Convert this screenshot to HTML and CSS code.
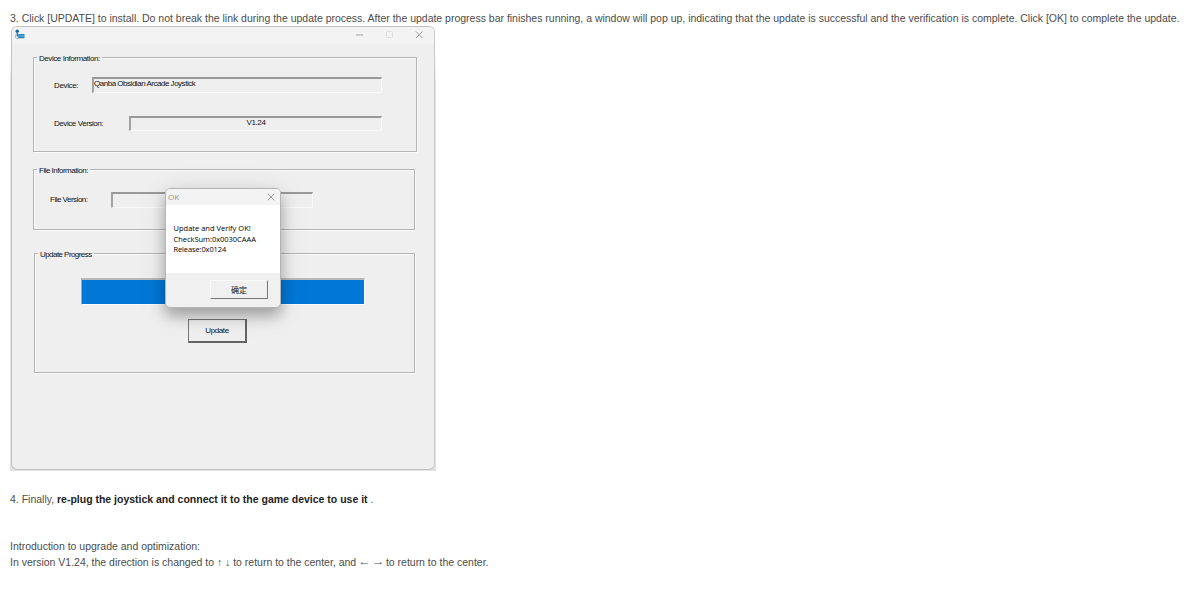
FILE: index.html
```html
<!DOCTYPE html>
<html lang="en">
<head>
<meta charset="utf-8">
<title>Firmware update guide</title>
<link rel="stylesheet" href="styles.css">
</head>
<body>
<main class="page">
  <p class="step step-install">3. Click [UPDATE] to install. Do not break the link during the update process. After the update progress bar finishes running, a window will pop up, indicating that the update is successful and the verification is complete. Click [OK] to complete the update.</p>

  <div class="shot">
  <section class="window">
    <header class="titlebar">
      <svg class="app-icon" viewBox="0 0 11 11">
        <circle cx="3.2" cy="2.2" r="1.7" fill="#1668a8"/>
        <path d="M2.6 3h1.4v4.5H2.6z" fill="#2a7ab5"/>
        <path d="M2.5 5C.8 6.2.8 8.8 2.6 9.6h2" fill="none" stroke="#9aaebb"/>
        <path d="M4.200 5H10.500v4.200H4.200z" fill="#2585c4"/>
        <path d="M5 7h5" stroke="#8bc4e6" stroke-width=".8"/>
      </svg>
      <svg class="controls" viewBox="0 0 70 10">
        <path d="M1 5h7" stroke="#a2a2a2" stroke-width="1.200"/>
        <rect x="31.500" y="1.500" width="6" height="6" rx="1" fill="none" stroke="#dedede"/>
        <path d="M61 1.500l6.500 6.500M67.500 1.500L61 8" stroke="#999" stroke-width="1"/>
      </svg>
    </header>

    <div class="group group-device">
      <div class="legend"><span class="t-devinfo">Device Information:</span></div>
      <div class="row row-device">
        <span class="label t-device">Device:</span>
        <div class="field field-device"><span class="t-name">Qanba Obsidian Arcade Joystick</span></div>
      </div>
      <div class="row row-version">
        <span class="label t-devver">Device Version:</span>
        <div class="field field-version"><span class="t-version">V1.24</span></div>
      </div>
    </div>

    <div class="group group-file">
      <div class="legend"><span class="t-fileinfo">File Information:</span></div>
      <div class="row row-file">
        <span class="label t-filever">File Version:</span>
        <div class="field field-file"></div>
      </div>
    </div>

    <div class="group group-progress">
      <div class="legend"><span class="t-progress">Update Progress</span></div>
      <div class="progress"></div>
      <button class="update">Update</button>
    </div>

    <section class="dialog">
      <header class="dialog-title">
        <span>OK</span>
        <svg class="dialog-close" viewBox="0 0 8 8"><path d="M.7.7l6.600 6.600M7.300.7L.7 7.300" stroke="#8c8c8c" stroke-width=".9"/></svg>
      </header>
      <div class="dialog-body">
        <div class="m1">Update and Verify OK!</div>
        <div class="m2">CheckSum:0x0030CAAA</div>
        <div class="m3">Release:0x0124</div>
      </div>
      <footer class="dialog-footer"><button class="confirm">确定</button></footer>
    </section>
  </section>
  </div>

  <p class="step step-replug">4. Finally, <strong>re-plug the joystick and connect it to the game device to use it</strong> .</p>
  <p class="step intro">Introduction to upgrade and optimization:</p>
  <p class="step note">In version V1.24, the direction is changed to ↑ ↓ to return to the center, and <span class="arrow">←</span> <span class="arrow">→</span> to return to the center.</p>
</main>
</body>
</html>
```
FILE: styles.css
```css
* { box-sizing: border-box; }
body {
  margin: 0;
  background: #fff;
  color: #4c4c4c;
  font-family: "Liberation Sans", Arial, sans-serif;
}
.page { padding: 10px 0 0 10px; }
.step {
  margin: 0;
  font-size: 10.5px;
  line-height: 16px;
  letter-spacing: -.007px;
  white-space: nowrap;
}
.step strong { color: #222; }
.arrow { display: inline-block; transform: translateY(-1px) scaleX(1.2); }
.shot {
  width: 426px;
  height: 445px;
  padding-left: 1px;
  background: linear-gradient(#fff 30px, #e2e2e2 60px);
}
.window {
  position: relative;
  width: 424px;
  height: 444px;
  border: 1px solid #c2c2c2;
  border-right-color: #cacaca;
  border-radius: 6px;
  background: #efefef;
  overflow: hidden;
  color: #111;
  font-size: 8px;
}
.titlebar {
  display: flex;
  justify-content: space-between;
  height: 17px;
  padding: 2px 9px 0 2px;
  background: #f3f3f3;
}
.app-icon { width: 11px; height: 11px; }
.controls { width: 70px; height: 10px; margin-top: 1px; }
.group {
  border: 1px solid #b4b4b4;
  box-shadow: inset 1px 1px #fafafa, 1px 1px #fafafa;
}
.group-device { width: 384px; height: 95px; margin: 13px 0 0 21px; }
.group-file { width: 382px; height: 61px; margin: 17px 0 0 21px; }
.group-progress { width: 381px; height: 120px; margin: 23px 0 0 22px; }
.legend {
  height: 10px;
  margin: -5px 0 0 3px;
  line-height: 11px;
  white-space: nowrap;
}
.legend span {
  display: inline-block;
  padding: 0 2px;
  background: #efefef;
}
.row { display: flex; }
.label { line-height: 15px; white-space: nowrap; }
.field {
  display: flex;
  border: 1px solid #f9f9f9;
  border-top: 2px solid #999;
  border-left: 2px solid #a2a2a2;
  line-height: 10px;
  white-space: nowrap;
}
.row-device { margin: 14px 0 0 20px; }
.row-device .label { width: 38px; padding-top: 1px; }
.field-device { width: 290px; height: 16px; }
.row-version { margin: 23px 0 0 20px; }
.row-version .label { width: 75px; }
.field-version { width: 253px; height: 15px; justify-content: center; }
.row-file { margin: 17px 0 0 16px; }
.row-file .label { width: 61px; }
.field-file { width: 202px; height: 16px; }
.progress {
  width: 284px;
  height: 27px;
  margin: 19px 0 0 46px;
  background: #0078d7;
  border: 1px solid #fafafa;
  border-top: 2px solid #b9b9b9;
  border-left: 1px solid #a9a9a9;
}
button {
  display: block;
  padding: 0;
  font-family: "Liberation Sans", "Noto Sans CJK SC", sans-serif;
  font-size: 8px;
  color: #111;
  background: #f0f0f0;
  border-radius: 0;
}
.update {
  width: 59px;
  height: 24px;
  margin: 14px 0 0 153px;
  border: 1px solid #777;
  border-right: 2px solid #646464;
  border-bottom: 2px solid #646464;
  background: transparent;
  letter-spacing: -.4px;
}
.dialog {
  position: absolute;
  left: 153px;
  top: 161px;
  width: 116px;
  height: 120px;
  border: 1px solid #b5b5b5;
  border-radius: 5px;
  background: #f0f0f0;
  box-shadow: 0 8px 14px rgba(0, 0, 0, .28), 0 4px 30px rgba(0, 0, 0, .1);
  overflow: hidden;
}
.dialog-title {
  display: flex;
  justify-content: space-between;
  align-items: center;
  height: 16px;
  padding: 0 5px 0 2px;
  background: #f3f3f3;
  color: #929292;
  font: 8px "Open Sans", sans-serif;
}
.dialog-title span { transform: translateY(-1px); }
.dialog-close { width: 8px; height: 8px; }
.dialog-body {
  height: 68px;
  padding: 18px 0 0 7.500px;
  background: #fff;
  color: #000;
  font: 7.5px/10.5px "Open Sans", sans-serif;
  white-space: nowrap;
}
.m2 { letter-spacing: -.03px; }
.m3 { letter-spacing: -.12px; }
.dialog-footer { padding: 7px 0 0 44px; }
.confirm {
  width: 58px;
  height: 19px;
  border: 1px solid #fafafa;
  border-right: 1px solid #777;
  border-bottom: 1px solid #777;
}
.t-devinfo, .t-devver { letter-spacing: -.43px; }
.t-device { letter-spacing: -.35px; }
.t-version { letter-spacing: -.35px; }
.t-name { letter-spacing: -.48px; }
.t-fileinfo, .t-filever { letter-spacing: -.5px; }
.t-progress { letter-spacing: -.56px; }
.step-replug { margin-top: 20px; }
.intro { margin-top: 31px; }
```
